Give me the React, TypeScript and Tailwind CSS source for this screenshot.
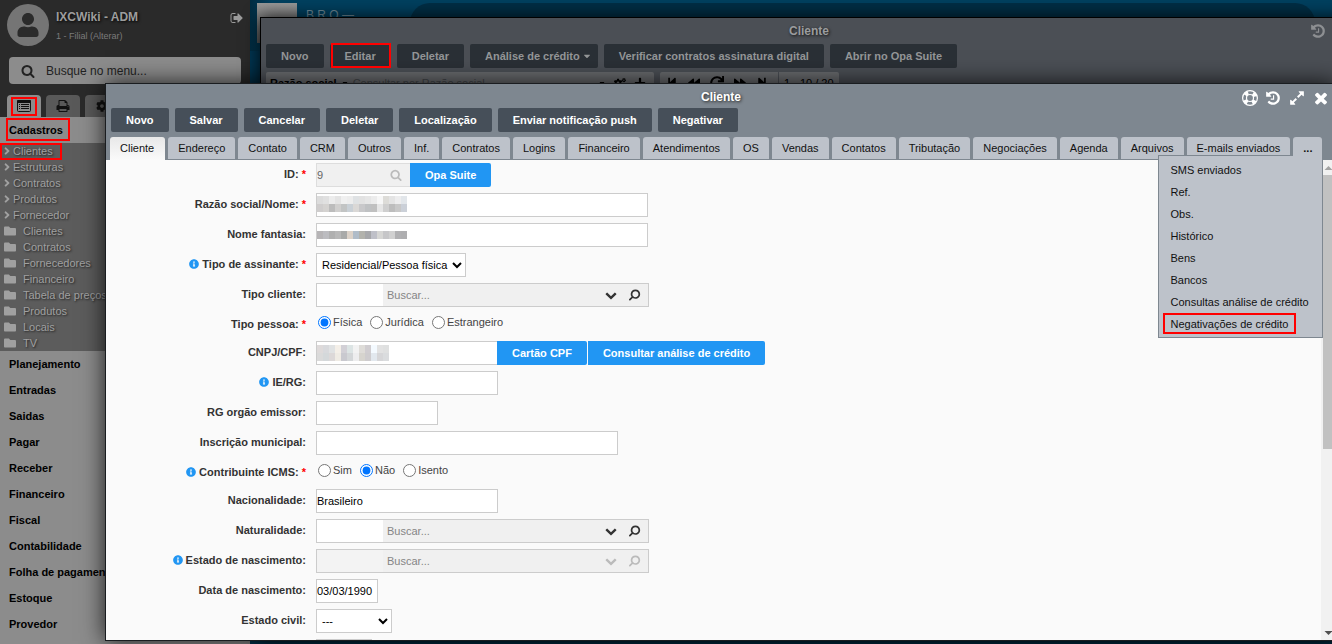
import React from "react"
import { FaAngleRight, FaCaretDown, FaCog, FaCogs, FaFolder, FaInfoCircle, FaPlus, FaRedo, FaUser } from "react-icons/fa"
import { FaBackward, FaForward, FaStepBackward, FaStepForward } from "react-icons/fa"

const paths = {
    search: "M1216 832q0-185-131.5-316.5t-316.5-131.5-316.5 131.5-131.5 316.5 131.5 316.5 316.5 131.5 316.5-131.5 131.5-316.5zm512 832q0 52-38 90t-90 38q-54 0-90-38l-343-342q-179 124-399 124-143 0-273.5-55.5t-225-150-150-225-55.5-273.5 55.5-273.5 150-225 225-150 273.5-55.5 273.5 55.5 225 150 150 225 55.5 273.5q0 220-124 399l343 343q37 37 37 90z",
    history: "M1664 896q0 156-61 298t-164 245-245 164-298 61q-172 0-327-72.5t-264-204.5q-7-10-6.5-22.5t8.5-20.5l137-138q10-9 25-9 16 2 23 12 73 95 179 147t225 52q104 0 198.5-40.5t163.5-109.5 109.5-163.5 40.5-198.5-40.5-198.5-109.5-163.5-163.5-109.5-198.5-40.5q-98 0-188 35.5t-160 101.5l137 138q31 30 14 69-17 40-59 40h-448q-26 0-45-19t-19-45v-448q0-42 40-59 39-17 69 14l130 129q107-101 244.5-156.5t284.5-55.5q156 0 298 61t245 164 164 245 61 298zm-640-288v448q0 14-9 23t-23 9h-320q-14 0-23-9t-9-23v-64q0-14 9-23t23-9h224v-352q0-14 9-23t23-9h64q14 0 23 9t9 23z",
    expand: "M883 1056q0 13-10 23l-332 332 144 144q19 19 19 45t-19 45-45 19h-448q-26 0-45-19t-19-45v-448q0-26 19-45t45-19 45 19l144 144 332-332q10-10 23-10t23 10l114 114q10 10 10 23zm781-864v448q0 26-19 45t-45 19-45-19l-144-144-332 332q-10 10-23 10t-23-10l-114-114q-10-10-10-23t10-23l332-332-144-144q-19-19-19-45t19-45 45-19h448q26 0 45 19t19 45z",
    times: "M1490 1322q0 40-28 68l-136 136q-28 28-68 28t-68-28l-294-294-294 294q-28 28-68 28t-68-28l-136-136q-28-28-28-68t28-68l294-294-294-294q-28-28-28-68t28-68l136-136q28-28 68-28t68 28l294 294 294-294q28-28 68-28t68 28l136 136q28 28 28 68t-28 68l-294 294 294 294q28 28 28 68z",
    signOut: "M704 1440q0 4 1 20t.5 26.5-3 23.5-10 19.5-20.5 6.5h-320q-119 0-203.5-84.5t-84.5-203.5v-704q0-119 84.5-203.5t203.5-84.5h320q13 0 22.5 9.5t9.5 22.5q0 4 1 20t.5 26.5-3 23.5-10 19.5-20.5 6.5h-320q-66 0-113 47t-47 113v704q0 66 47 113t113 47h312l11.5 1 11.5 3 8 5.5 7 9 2 13.5zm928-544q0 26-19 45l-544 544q-19 19-45 19t-45-19-19-45v-288h-448q-26 0-45-19t-19-45v-384q0-26 19-45t45-19h448v-288q0-26 19-45t45-19 45 19l544 544q19 19 19 45z",
    print: "M448 1536h896v-256h-896v256zm0-640h896v-384h-160q-40 0-68-28t-28-68v-160h-640v640zm1152 64q0-26-19-45t-45-19-45 19-19 45 19 45 45 19 45-19 19-45zm128 0v416q0 13-9.5 22.5t-22.5 9.5h-224v160q0 40-28 68t-68 28h-960q-40 0-68-28t-28-68v-160h-224q-13 0-22.500-9.500t-9.500-22.500v-416q0-79 56.500-135.500t135.500-56.500h64v-544q0-40 28-68t68-28h672q40 0 88 20t76 48l152 152q28 28 48 76t20 88v256h64q79 0 135.500 56.500t56.500 135.500z",
    down: "M1683 808l-742 741q-19 19-45 19t-45-19l-742-741q-19-19-19-45.5t19-45.5l166-165q19-19 45-19t45 19l531 531 531-531q19-19 45-19t45 19l166 165q19 19 19 45.5t-19 45.5z",
}

function Icon({ name, className }: { name: keyof typeof paths; className: string }) {
    return (
        <svg viewBox="0 0 1792 1792" fill="currentColor" className={className} aria-hidden="true">
            <path d={paths[name]} />
        </svg>
    )
}

function LifeRing() {
    return (
        <svg viewBox="0 0 16 16" fill="none" stroke="currentColor" className="size-4" aria-hidden="true">
            <circle cx="8" cy="8" r="7.4" strokeWidth="1.2" />
            <circle cx="8" cy="8" r="3.5" strokeWidth="1.2" />
            <circle cx="8" cy="8" r="5.5" strokeWidth="3.8" strokeDasharray="3.6 5.04" strokeDashoffset="-2.52" />
        </svg>
    )
}

function ListAlt() {
    return (
        <svg viewBox="0 0 14 12" className="h-3 w-3.5" aria-hidden="true">
            <rect x="0.5" y="0.5" width="13" height="11" rx="1" fill="none" stroke="#111" />
            <rect x="0" y="0" width="14" height="3" rx="1" fill="#111" />
            <path d="M2 4.5h1M4 4.5h8M2 6.5h1M4 6.5h8M2 8.5h1M4 8.5h8" stroke="#111" />
        </svg>
    )
}

function Mark({ className }: { className: string }) {
    return <span className={"pointer-events-none absolute z-20 border-2 border-[#ff0000] " + className} />
}

/* hidden customer data, drawn as square tiles */
function Mosaic({ rows, height, className }: { rows: string[][]; height: number; className: string }) {
    return (
        <svg className={"pointer-events-none absolute " + className} width={rows[0].length * 6} height={rows.length * height} aria-hidden="true">
            {rows.map((row, y) =>
                row.map((c, x) => <rect key={x + "-" + y} x={x * 6} y={y * height} width="6" height={height} fill={c} />)
            )}
        </svg>
    )
}

const nameTiles = [
    ["#dcdcdc", "#e0e0e0", "#ececec", "#e4e4e4", "#f0f0f0", "#ededed", "#dfe2e4", "#e2e2e2", "#e6e6e6", "#ececec", "#f7f7f7", "#dddcd8", "#e4e4e4", "#ededee", "#e2e6ea"],
    ["#cfcdcd", "#d4d2d0", "#bcbcbc", "#d0cfce", "#c2c4c4", "#c9d0d6", "#dad8d6", "#c8c8ca", "#bfc1c3", "#c0c0c0", "#e6e6e6", "#cfcfcf", "#bdbdbd", "#c8c8c8", "#cbd0d8"],
]
const fantasyTiles = [["#b6b4b6", "#bcbcc0", "#b0b0b0", "#b8b8b8", "#a9aaa9", "#dcd2c8", "#b0bcc8", "#b2b2ac", "#a6a7aa", "#bfc0c8", "#d6d6d4", "#c6c6c8", "#d0d0d0", "#b0b0b2", "#aeaeb0"]]
const cpfTiles = [
    ["#dedada", "#d8d9dc", "#e0e2e3", "#f4efe8", "#d2d0d6", "#dce4e4", "#f2f2f2", "#dedcd8", "#d0cdd0", "#f4faff", "#e2e2e2", "#dfe0e0"],
    ["#dadada", "#d4d8da", "#dcd8d8", "#efebe4", "#c9c9cf", "#d3d6d8", "#ededee", "#d6d4ce", "#ceccce", "#e2e8ee", "#d6d6d8", "#dadcde"],
]

const sideLinks = ["Clientes", "Estruturas", "Contratos", "Produtos", "Fornecedor"]
const sideFolders = ["Clientes", "Contratos", "Fornecedores", "Financeiro", "Tabela de preços", "Produtos", "Locais", "TV"]
const sideGroups = ["Planejamento", "Entradas", "Saidas", "Pagar", "Receber", "Financeiro", "Fiscal", "Contabilidade", "Folha de pagamento", "Estoque", "Provedor"]

function Sidebar() {
    return (
        <aside className="w-[250px] shrink-0 overflow-hidden bg-[#2a2a2a]">
            <div className="flex h-[57px] gap-[7px] pt-1 pr-1.5 pl-[7px]">
                <div className="flex size-[42px] items-center justify-center rounded-full bg-[#757575]">
                    <FaUser className="size-6 text-[#2b2b2b]" />
                </div>
                <div className="flex-1 pt-[5px]">
                    <div className="text-[12px] leading-4 font-bold text-[#9d9d9d] [text-shadow:1px_1px_3px_#000]">IXCWiki - ADM</div>
                    <a href="#filial" className="mt-[3px] block text-[9px] leading-4 text-[#7b7b7b]">1 - Filial (Alterar)</a>
                </div>
                <button aria-label="Sair" className="mt-[7px] h-3.5 text-[#9a9a9a]">
                    <Icon name="signOut" className="size-3.5" />
                </button>
            </div>
            <label className="mx-[9px] flex h-[27px] items-center gap-[11px] rounded bg-[#8c8c8c] pl-3 text-[#222]">
                <Icon name="search" className="size-3.5" />
                <input placeholder="Busque no menu..." className="w-40 bg-transparent text-[12px] outline-none placeholder:text-[#222]" />
            </label>
            <div className="mt-[11px] flex gap-[5px] pl-[7px]">
                <button aria-label="Menu" className="relative flex h-[22px] w-[34px] items-center justify-center rounded-t bg-[#8c8c8c]">
                    <ListAlt />
                    <Mark className="inset-x-1 top-0.5 bottom-px" />
                </button>
                <button aria-label="Imprimir" className="flex h-[22px] w-[34px] items-center justify-center rounded-t bg-[#595959] text-[#111]">
                    <Icon name="print" className="size-3.5" />
                </button>
                <button aria-label="Configurar" className="flex h-[22px] w-[34px] items-center justify-center rounded-t bg-[#595959] text-[#111]">
                    <FaCog className="size-3" />
                </button>
            </div>
            <nav className="text-[11px]">
                <a href="#cadastros" className="relative block h-[26px] bg-[#8c8c8c] pl-[9px] leading-[26px] font-bold text-black">
                    Cadastros
                    <Mark className="top-px left-1.5 h-[23px] w-16" />
                </a>
                <div className="bg-[#5c5c5c] text-[#a0a0a0] [text-shadow:1px_1px_2px_#222]">
                    {sideLinks.map((t, i) => (
                        <a key={t} href="#menu" className="relative flex h-4 items-center pl-px">
                            <FaAngleRight className="size-3" />
                            {t}
                            {i === 0 && <Mark className="top-0 left-0 h-[17px] w-[62px]" />}
                        </a>
                    ))}
                    {sideFolders.map((t) => (
                        <a key={t} href="#pasta" className="flex h-4 items-center gap-[7px] pl-1 whitespace-nowrap">
                            <FaFolder className="size-3" />
                            {t}
                        </a>
                    ))}
                </div>
                <div className="h-[320px] bg-[#8c8c8c]">
                    {sideGroups.map((t) => (
                        <a key={t} href="#grupo" className="block h-[26px] pl-[9px] leading-[26px] font-bold text-black">{t}</a>
                    ))}
                </div>
            </nav>
        </aside>
    )
}

function ListWindow() {
    const btn = "relative h-6 rounded-xs bg-[#2a3036] pl-[15px] text-[11px] font-bold text-[#949698] "
    return (
        <section className="absolute top-[17px] -right-[25px] bottom-1 left-[260px] border border-black bg-[#4b4f55] shadow-[0_0_16px_rgba(0,0,0,0.8)]">
            <header className="flex h-[26px] items-center">
                <h2 className="flex-1 pl-[47px] text-center text-[12px] font-bold text-[#9a9c9e] [text-shadow:1px_1px_3px_#111]">Cliente</h2>
                <button aria-label="Histórico" className="mr-[30px] text-[#8d8f92]">
                    <Icon name="history" className="size-4" />
                </button>
            </header>
            <div className="flex gap-1.5 pl-[5px]">
                <button className={btn + "pr-[15px]"}>Novo</button>
                <button className={btn + "pr-[15px]"}>
                    Editar
                    <Mark className="-top-px right-0 bottom-0 left-px" />
                </button>
                <button className={btn + "pr-[15px]"}>Deletar</button>
                <button className={btn + "flex items-center gap-0.5 pr-1.5"}>
                    Análise de crédito <FaCaretDown className="size-2.5" />
                </button>
                <button className={btn + "pr-[15px]"}>Verificar contratos assinatura digital</button>
                <button className={btn + "pr-[15px]"}>Abrir no Opa Suite</button>
            </div>
            <div className="mt-1 flex h-[22px] gap-1.5 pl-[5px] text-[11px] text-black">
                <div className="flex w-[388px] items-center rounded-t-xs bg-[#696b6e] pl-1">
                    <b>Razão social</b>
                    <FaCaretDown className="ml-1 size-2" />
                    <input aria-label="Consultar" placeholder="Consultar por Razão social" className="ml-1 min-w-0 flex-1 bg-transparent outline-none placeholder:text-[#44474b]" />
                    <FaCaretDown className="mr-2 size-2" />
                    <FaCogs className="mr-2 size-3" />
                    <FaPlus className="mr-2 size-3" />
                </div>
                <div className="flex items-center gap-2.5 rounded-t-xs bg-[#696b6e] pl-1.5">
                    <FaStepBackward className="size-3" />
                    <FaBackward className="size-3" />
                    <FaRedo className="size-3.5" />
                    <FaForward className="size-3" />
                    <FaStepForward className="size-3" />
                    <span className="flex h-[22px] items-center border-l border-[#4b4f55] px-[5px]">1 - 10 / 20</span>
                </div>
            </div>
        </section>
    )
}

const actions = ["Novo", "Salvar", "Cancelar", "Deletar", "Localização", "Enviar notificação push", "Negativar"]
const tabs = ["Cliente", "Endereço", "Contato", "CRM", "Outros", "Inf.", "Contratos", "Logins", "Financeiro", "Atendimentos", "OS", "Vendas", "Contatos", "Tributação", "Negociações", "Agenda", "Arquivos", "E-mails enviados"]
const more = ["SMS enviados", "Ref.", "Obs.", "Histórico", "Bens", "Bancos", "Consultas análise de crédito", "Negativações de crédito"]

type RowProps = { id: string; label: string; required?: boolean; info?: boolean; children: React.ReactNode }

function Row({ id, label, required, info, children }: RowProps) {
    return (
        <div className="flex h-6 shrink-0 gap-2.5">
            <label htmlFor={id} className="flex h-[22px] w-[200px] shrink-0 items-center justify-end gap-[3px] font-bold text-[#333]">
                {info && <FaInfoCircle className="size-2.5 text-[#2196f3]" />}
                {label}:
                {required && <span className="text-[#ff0000]">*</span>}
            </label>
            <div className="relative flex">{children}</div>
        </div>
    )
}

function RadioRow({ id, label, info, options, checked }: { id: string; label: string; info?: boolean; options: string[]; checked: string }) {
    return (
        <fieldset className="flex h-[22px] shrink-0 gap-2.5">
            <legend className="float-left flex h-[22px] w-[200px] items-center justify-end gap-[3px] font-bold text-[#333]">
                {info && <FaInfoCircle className="size-2.5 text-[#2196f3]" />}
                {label}:
                <span className="text-[#ff0000]">*</span>
            </legend>
            <div className="flex h-[18px] items-center gap-2 pl-0.5 text-[#444]">
                {options.map((o) => (
                    <label key={o} className="flex items-center gap-0.5">
                        <input type="radio" name={id} defaultChecked={o === checked} className="size-[13px]" />
                        {o}
                    </label>
                ))}
            </div>
        </fieldset>
    )
}

const box = "h-6 border border-[#ccc] bg-white text-black outline-none "
const blue = "h-6 bg-[#2196f3] px-[15px] font-bold text-white "

function SearchBox({ id, disabled }: { id: string; disabled?: boolean }) {
    return (
        <div className="flex h-6 w-[333px] border border-[#ccc] bg-[#f0f0f0]">
            <input id={id} disabled={disabled} className="w-[66px] bg-white outline-none disabled:bg-[#f3f3f3]" />
            <input aria-label="Buscar" placeholder="Buscar..." disabled={disabled} className="min-w-0 flex-1 pl-1 outline-none placeholder:text-[#858585]" />
            <button type="button" aria-label="Abrir lista" disabled={disabled} className="flex w-6 items-center justify-center text-[#333] disabled:text-[#bbb]">
                <Icon name="down" className="size-3" />
            </button>
            <button type="button" aria-label="Pesquisar" disabled={disabled} className="mr-px flex w-6 items-center justify-center text-[#333] disabled:text-[#bbb]">
                <Icon name="search" className="size-3 rotate-90" />
            </button>
        </div>
    )
}

function ClientForm() {
    return (
        <form className="flex flex-1 flex-col gap-1.5 overflow-hidden pt-[3px] text-[11px]">
            <Row id="id" label="ID" required>
                <div className="flex h-6 w-[94px] items-center border border-r-0 border-[#ddd] bg-[#f0f0f0] pr-2">
                    <input id="id" defaultValue="9" disabled className="min-w-0 flex-1 text-[#666]" />
                    <Icon name="search" className="size-3 text-[#bbb]" />
                </div>
                <button type="button" className={blue + "rounded-r-xs"}>Opa Suite</button>
            </Row>
            <Row id="razao" label="Razão social/Nome" required>
                <input id="razao" className={box + "w-[332px]"} />
                <Mosaic rows={nameTiles} height={8} className="top-[3px] left-px" />
            </Row>
            <Row id="fantasia" label="Nome fantasia">
                <input id="fantasia" className={box + "w-[332px]"} />
                <Mosaic rows={fantasyTiles} height={8} className="top-2 left-px" />
            </Row>
            <Row id="assinante" label="Tipo de assinante" info required>
                <select id="assinante" className={box + "w-[150px] pl-px"}>
                    <option>Residencial/Pessoa física</option>
                </select>
            </Row>
            <Row id="tipo" label="Tipo cliente">
                <SearchBox id="tipo" />
            </Row>
            <RadioRow id="pessoa" label="Tipo pessoa" options={["Física", "Jurídica", "Estrangeiro"]} checked="Física" />
            <Row id="cpf" label="CNPJ/CPF">
                <input id="cpf" className={box + "w-[181px] border-r-0"} />
                <Mosaic rows={cpfTiles} height={8} className="top-1 left-px" />
                <button type="button" className={blue + "rounded-r-xs"}>Cartão CPF</button>
                <button type="button" className={blue + "ml-px rounded-r-xs"}>Consultar análise de crédito</button>
            </Row>
            <Row id="rg" label="IE/RG" info>
                <input id="rg" className={box + "w-[182px]"} />
            </Row>
            <Row id="orgao" label="RG orgão emissor">
                <input id="orgao" className={box + "w-[122px]"} />
            </Row>
            <Row id="municipal" label="Inscrição municipal">
                <input id="municipal" className={box + "w-[302px]"} />
            </Row>
            <RadioRow id="icms" label="Contribuinte ICMS" info options={["Sim", "Não", "Isento"]} checked="Não" />
            <Row id="nacionalidade" label="Nacionalidade">
                <input id="nacionalidade" defaultValue="Brasileiro" className={box + "w-[182px]"} />
            </Row>
            <Row id="naturalidade" label="Naturalidade">
                <SearchBox id="naturalidade" />
            </Row>
            <Row id="estado" label="Estado de nascimento" info>
                <SearchBox id="estado" disabled />
            </Row>
            <Row id="nascimento" label="Data de nascimento">
                <input id="nascimento" defaultValue="03/03/1990" className={box + "w-[62px]"} />
            </Row>
            <Row id="civil" label="Estado civil">
                <select id="civil" className={box + "w-[76px] pl-px"}>
                    <option>---</option>
                </select>
            </Row>
            <input aria-label="Complemento" className={box + "ml-[210px] w-14 shrink-0"} />
        </form>
    )
}

function ClientWindow() {
    const tab = "shrink-0 rounded-t-[3px] px-2.5 text-[11px] text-[#111] "
    return (
        <section className="absolute top-[83px] -right-[5px] bottom-[3px] left-[105px] flex flex-col border border-[#1a1d20] bg-[#fafafa] shadow-[0_0_22px_rgba(0,0,0,0.8)]">
            <header className="border-b border-[#7e8790] bg-[#7e8790]">
                <div className="relative flex h-6 items-center">
                    <h1 className="flex-1 pt-0.5 text-center text-[12px] font-bold text-white [text-shadow:1px_1px_3px_#222]">Cliente</h1>
                    <div className="absolute top-[5px] right-[3px] flex items-center text-white">
                        <button aria-label="Ajuda" className="flex w-[23px] justify-center"><LifeRing /></button>
                        <button aria-label="Histórico" className="flex w-6 justify-center"><Icon name="history" className="size-4" /></button>
                        <button aria-label="Expandir" className="flex w-6 justify-center"><Icon name="expand" className="size-4" /></button>
                        <button aria-label="Fechar" className="flex w-6 justify-center"><Icon name="times" className="size-[18px]" /></button>
                    </div>
                </div>
                <div className="flex gap-1.5 pl-[5px]">
                    {actions.map((t) => (
                        <button key={t} className="h-6 rounded-xs bg-[#464f59] px-[15px] text-[11px] font-bold text-white">{t}</button>
                    ))}
                </div>
                <div className="mt-[5px] flex h-[22px] gap-[3px] pl-1">
                    {tabs.map((t, i) => (
                        <button key={i} className={tab + (i === 0 ? "h-[23px] bg-linear-to-b from-[#e8e8e8] to-[#fafafa] pr-[11px]" : "h-[22px] bg-[#bdc2ca]")}>{t}</button>
                    ))}
                    <div className="relative flex h-[22px]">
                        <button className={tab + "relative z-20 h-[22px] bg-[#bdc2ca] font-bold"}>...</button>
                        <div className="absolute top-[18px] -right-px z-10 w-[165px] border border-[#7e8790] bg-[#bdc2ca] pt-[3px] pb-0.5">
                            {more.map((t, i) => (
                                <button key={t} className="relative block h-[22px] w-full pl-[11px] text-left text-[11px] whitespace-nowrap text-[#111]">
                                    {t}
                                    {i === more.length - 1 && <Mark className="top-0 left-1 h-[21px] w-[133px]" />}
                                </button>
                            ))}
                        </div>
                    </div>
                </div>
            </header>
            <div className="flex min-h-0 flex-1">
                <ClientForm />
                <div className="flex w-[15px] flex-col bg-[#f1f1f1]">
                    <svg viewBox="0 0 15 15" className="size-[15px] fill-[#a3a3a3]"><path d="M3.5 10h8L7.5 6z" /></svg>
                    <div className="ml-0.5 h-[57%] bg-[#c1c1c1]" />
                    <svg viewBox="0 0 15 15" className="mt-auto size-[15px] fill-[#505050]"><path d="M3.5 6h8L7.5 10z" /></svg>
                </div>
            </div>
        </section>
    )
}

export default function App() {
    return (
        <div className="relative flex h-screen overflow-hidden font-['Liberation_Sans',Arial,sans-serif]">
            <Sidebar />
            <main className="flex-1 bg-linear-to-r from-[#002c42] to-[#00405f] to-2%">
                <div className="flex gap-[9px] pt-[3px] pr-[17px] pl-[7px]">
                    <div className="size-10 bg-linear-to-b from-[#989898] to-[#555]" />
                    <div className="w-[95px] pt-1 text-[12px] leading-4 text-[#6f8a98]">B R O —</div>
                    <div className="h-10 flex-1 rounded-t-[20px] bg-[#002e45]" />
                </div>
                <div className="mt-2 h-[calc(100vh-51px)] bg-[#003652]" />
            </main>
            <ListWindow />
            <ClientWindow />
        </div>
    )
}
